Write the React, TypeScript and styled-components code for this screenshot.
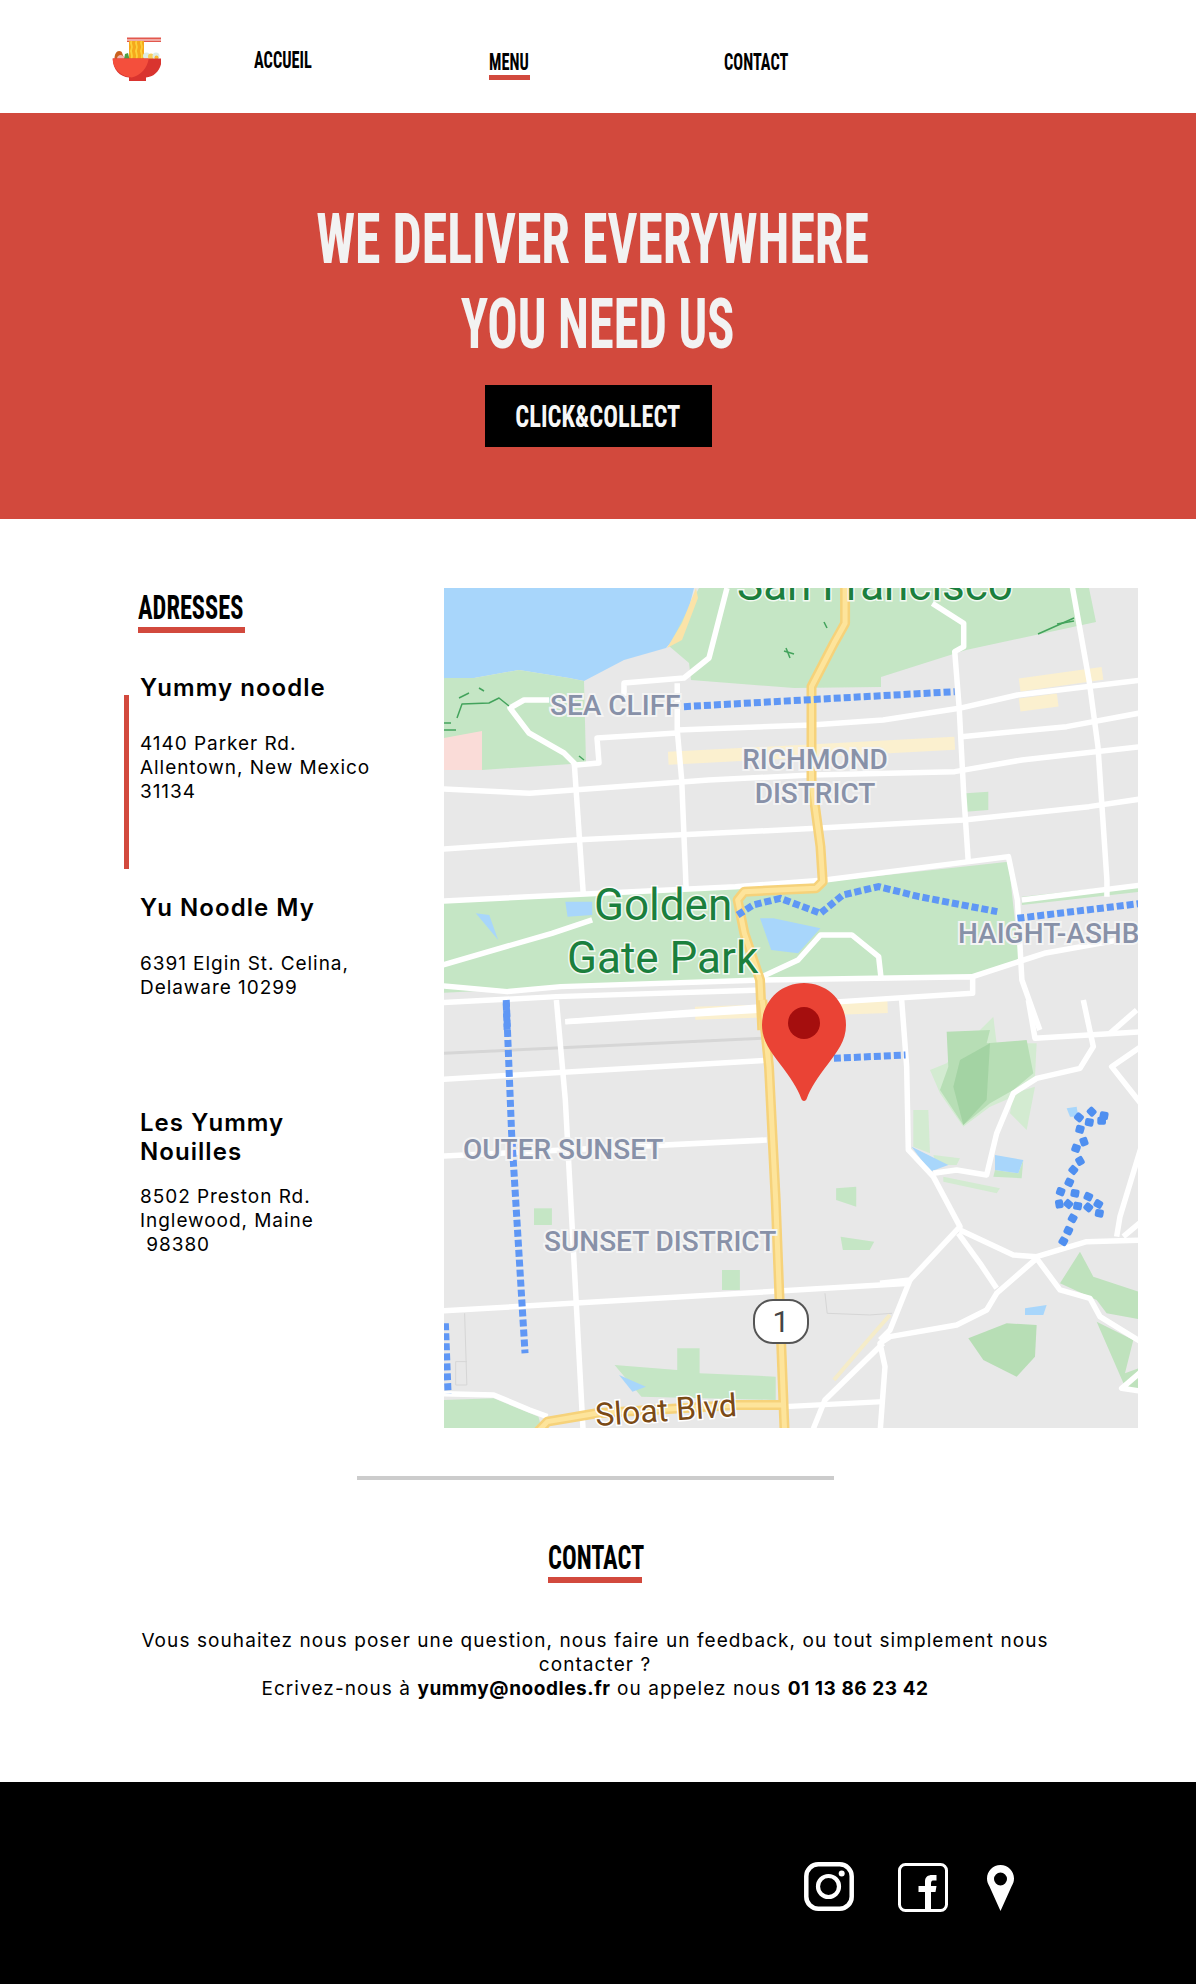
import React from 'react'
import styled, { createGlobalStyle } from 'styled-components'

const RED = '#d2493d'
const CONDENSED = `'Liberation Sans Narrow', 'Roboto Condensed', Roboto, sans-serif`
const BODY = `Inter, 'Open Sans', sans-serif`

const GlobalStyle = createGlobalStyle`
	html, body {
		margin: 0;
		padding: 0;
		background: #fff;
	}
	body {
		font-family: ${BODY};
		color: #000;
	}
	* {
		box-sizing: border-box;
	}
`

const addresses = [
	{ name: 'Yummy noodle', lines: ['4140 Parker Rd.', 'Allentown, New Mexico', '31134'], active: true, height: 220 },
	{ name: 'Yu Noodle My', lines: ['6391 Elgin St. Celina,', 'Delaware 10299'], active: false, height: 215 },
	{ name: ['Les Yummy', 'Nouilles'], lines: ['8502 Preston Rd.', 'Inglewood, Maine', '\u00a098380'], active: false, height: 160 },
]

const Logo = () => (
	<LogoSvg viewBox="12 17 49 44" aria-label="Yummy noodles">
		<path d="M27 17.500h34v2H27zM27 20.500h34v1.400H27z" fill="#e2574c" />
		<path d="M29 21v18h15V21z" fill="#f6a81c" />
		<path d="M31.500 21c-2 3 2 5 0 8s2 5 0 10M36.500 21c-2 3 2 5 0 8s2 5 0 10M41.500 21c-2 3 2 5 0 8s2 5 0 10" fill="none" stroke="#fbd13a" strokeWidth="1.800" />
		<path d="M14.500 39c0-5 2-8 4.500-8s3 1 3.500 3l2 5z" fill="#c9601e" />
		<path d="M17 39c0-3 2-4 3.500-4s4 1 4.500 4z" fill="#f3b4ae" />
		<path d="M24 39l1-5 3-1 1.500 6z" fill="#4f9e45" />
		<circle cx="46.500" cy="36" r="3.500" fill="#dcebe6" />
		<circle cx="51" cy="36.500" r="3" fill="#f7ce5c" />
		<circle cx="56" cy="36" r="3.500" fill="#dcebe6" />
		<circle cx="56.500" cy="37.500" r="2" fill="#f7b733" />
		<path d="M12.700 38.500h49c0 11-7 18.500-15.700 19v3.500H29v-3.500c-9-.5-16.300-8-16.300-19z" fill="#d9342f" />
		<path d="M12.700 38.500h36c-1 9-8 17-17 19-10-1-19-8-19-19z" fill="#f44f3c" />
	</LogoSvg>
)

// the map is traced from crops of the picture, each group keeps the scale of its crop
const Z3 = 'translate(-4 -8) scale(.4476 .3333)'
const Z4 = 'translate(-4 412) scale(.4476 .3333)'
const Z5 = 'translate(436 412) scale(.3333)'

const GREEN = '#c5e6c5'
const WATER = '#a8d6fb'

const shore = {
	water: '0,0 250,0 240,40 222,60 180,72 140,93 125,90 75,82 30,90 0,90',
	sand: '252,0 238,35 223,60 238,52 254,10',
	west: '0,90 30,90 75,82 125,90 140,93 142,175 38,182 0,182',
	pink: '0,150 38,143 38,182 0,182',
	north: '255,0 225,58 245,75 247,92 350,100 437,99 437,89 522,62 652,34 645,0',
	roads: [
		'233,145 153,150 155,175 132,177 120,165 85,145 66,120 80,112 105,112',
		'283,0 265,70 240,90 180,95 180,108',
	],
	paths: [
		'15,110 25,105',
		'35,100 40,103',
		'13,130 18,116 45,115 55,110 65,118',
		'0,135 7,135',
		'0,142 12,142',
		'135,168 140,172',
		'340,63 350,66',
		'342,60 346,70',
		'594,46 630,30',
		'613,36 630,33',
		'380,34 383,40',
		'392,44 396,52',
	],
}

const top = {
	parkGolden: '-20,965 660,925 860,905 1270,845 1295,1150 1200,1190 1000,1190 720,1205 300,1220 -20,1240',
	parkEdge: '1300,950 1600,905 1600,930 1300,975',
	roads: [
		'1600,295 1290,345 1160,385 990,420 830,435 530,450',
		'530,310 530,450 540,600 550,930',
		'300,550 320,940',
		'-20,625 200,640 600,600 830,585 1150,575 1300,540 1600,495',
		'-20,810 300,780 840,745 1170,720 1450,680 1600,650',
		'-20,965 660,920 860,900 1270,830 1290,960 1300,1200 1340,1350',
		'1100,70 1170,130 1170,200 1150,215 1160,385 1170,640 1180,840',
		'1410,0 1450,300 1470,500 1490,900 1490,950',
		'1165,470 1400,440 1600,390',
		'1300,960 1600,910',
		'-20,1165 250,1060 340,1020',
		'720,1190 800,1140 850,1065 920,1065 980,1130 985,1190',
		'-20,1215 150,1235 270,1220 720,1200 1190,1190 1190,1240 720,1280 280,1325',
		'-20,1270 260,1250 720,1230',
		'1190,1190 1350,1120 1600,1060',
	],
	highway: '905,0 905,130 880,190 830,320 830,600 850,800 855,905 840,925 680,935 665,960 680,1060 715,1200 720,1350',
	beige: ['1295,315 1480,280', '1295,375 1380,360', '510,535 1150,490', '570,1300 1000,1280'],
	dots: [
		'545,380 1150,335',
		'665,1005 700,975 760,955 850,1000 900,945 980,920 1070,950 1245,995',
		'1290,1015 1600,965',
		'148,1270 150,1350',
	],
}

const bottom = {
	blvdPark: '390,1095 530,1110 530,1045 580,1045 580,1120 750,1130 750,1200 450,1190',
	sloatPark: '9,1200 120,1195 220,1250 230,1300 9,1300',
	patches: ['885,565 930,560 930,620 885,600', '210,625 250,625 250,675 210,675', '630,810 670,810 670,870 630,870', '895,710 970,725 960,750 900,750'],
	roads: [
		'-20,240 740,180',
		'-20,470 730,420',
		'-20,935 1050,850',
		'260,0 280,300 320,1300',
		'280,65 720,30',
		'990,1030 860,1200 830,1300',
		'770,1220 990,1205',
		'-20,1180 120,1185 200,1230 240,1250',
	],
	thin: ['860,880 865,940 960,945 1010,940', '55,940 60,1155 35,1155 35,1085 60,1085'],
	highway: ['720,0 735,200 750,600 770,1300', '770,1215 660,1215 350,1240 240,1265 215,1300'],
	dots: ['148,0 160,400 190,1060', '880,175 1040,165', '12,970 18,1180'],
}

const east = {
	roads: [
		'65,0 80,200 85,450 160,530 240,680 90,840 0,850',
		'90,840 30,990 0,1020',
		'160,520 230,510 320,525 350,400 400,280 470,235 600,205 640,140 610,0',
		'445,0 465,115 790,95',
		'690,100 770,30',
		'790,135 695,200 790,320',
		'240,690 400,765 470,770 620,725 790,720',
		'235,700 300,790 350,865',
		'470,775 350,880 320,930 230,975 30,1010 0,1030 15,1100 0,1300',
		'470,775 540,870 630,895 660,950 790,1030',
		'790,420 720,650 710,710',
		'790,660 730,710',
		'790,1110 725,1165 790,1175',
	],
	pale: [
		'100,330 145,330 150,460 100,440',
		'160,465 240,475 230,495 170,495',
		'190,530 360,565 350,580 190,545',
		'400,280 465,260 440,390 390,340',
		'150,210 200,190 340,50 350,130 470,130 465,230 400,290 330,320 250,380 180,280',
	],
	mid: ['200,95 330,90 320,130 440,120 460,220 400,270 330,310 250,375 180,270 205,200', '265,1015 380,970 470,975 465,1070 410,1130 310,1080'],
	deep: ['240,180 330,130 320,300 250,375 220,260'],
	south: ['600,755 640,830 790,880 790,960 680,940 650,900 540,850', '650,965 760,1020 735,1120 790,1100 790,1180 735,1160'],
	lakes: ['95,440 205,495 150,515', '345,465 430,480 415,520 345,510', '435,925 500,915 490,945 435,945', '560,325 590,320 595,350 570,350'],
	lawn: '430,480 425,535 340,530 345,510 415,520',
	// dashes of the trail on the hill: x, y, rotation
	trail: [
		[550, 724, 30], [565, 692, 25], [578, 655, 30], [593, 618, 10], [565, 612, 40], [538, 612, 80],
		[542, 575, 20], [568, 547, 25], [580, 510, 40], [600, 483, 60], [588, 445, 20], [612, 425, 70],
		[600, 388, 15], [597, 352, 40], [628, 367, 10], [665, 362, 0], [672, 347, 10], [635, 335, 45],
		[585, 580, 10], [625, 590, 25], [655, 612, 30], [658, 640, 10], [625, 622, 40],
	],
}

const MapView = () => (
	<MapSvg viewBox="0 0 694 840" aria-label="Carte">
		<rect width="694" height="840" fill="#e8e8e8" />
		<polygon points={shore.water} fill={WATER} />
		<polygon points={shore.north} fill={GREEN} />
		<polygon points={shore.sand} fill="#fbe3a8" />
		<polygon points={shore.west} fill={GREEN} />
		<polygon points={shore.pink} fill="#fadcd8" />
		<g transform={Z3}>
			<polygon points={top.parkGolden} fill={GREEN} />
			<polygon points={top.parkEdge} fill={GREEN} />
			<polygon points="1175,640 1225,635 1225,690 1175,695" fill={GREEN} />
			<polygon points="280,965 340,965 340,1005 285,1010" fill={WATER} />
			<polygon points="80,1000 110,1005 130,1080" fill={WATER} />
			<polygon points="715,1015 745,1015 850,1045 800,1120 740,1110" fill={WATER} />
			{top.beige.map(p => (
				<Road key={p} points={p} stroke="#fbf0cf" strokeWidth="13" />
			))}
			{top.roads.map(p => (
				<Road key={p} points={p} stroke="#fff" strokeWidth="5.500" />
			))}
		</g>
		{shore.roads.map(p => (
			<Road key={p} points={p} stroke="#fff" strokeWidth="5.500" />
		))}
		{shore.paths.map(p => (
			<Road key={p} points={p} stroke="#43a35c" strokeWidth="1.500" />
		))}
		<g transform={Z4}>
			<polygon points={bottom.blvdPark} fill={GREEN} />
			<polygon points={bottom.sloatPark} fill={GREEN} />
			{bottom.patches.map(p => (
				<polygon key={p} points={p} fill={GREEN} />
			))}
			<polygon points="400,1125 460,1160 430,1175" fill={WATER} />
			<Road points="9,160 720,115" stroke="#d6d6d6" strokeWidth="3" />
			{bottom.thin.map(p => (
				<Road key={p} points={p} stroke="#d6d6d6" strokeWidth="1" />
			))}
			<Road points="1005,945 950,1030 880,1140" stroke="#f5ecc9" strokeWidth="4" />
			{bottom.roads.map(p => (
				<Road key={p} points={p} stroke="#fff" strokeWidth="5.500" />
			))}
		</g>
		<g transform={Z5}>
			{east.pale.map(p => (
				<polygon key={p} points={p} fill="#d3ebd1" />
			))}
			{east.mid.map(p => (
				<polygon key={p} points={p} fill="#b7deb5" />
			))}
			{east.deep.map(p => (
				<polygon key={p} points={p} fill="#a3d3a3" />
			))}
			{east.south.map(p => (
				<polygon key={p} points={p} fill="#bfe2bd" />
			))}
			<polygon points={east.lawn} fill={GREEN} />
			{east.lakes.map(p => (
				<polygon key={p} points={p} fill={WATER} />
			))}
			{east.roads.map(p => (
				<Road key={p} points={p} stroke="#fff" strokeWidth="5.500" />
			))}
			{east.trail.map(([x, y, r]) => (
				<rect key={`${x}-${y}`} x={x - 13} y={y - 12} width="26" height="24" rx="6" fill="#4f8ff0" transform={`rotate(${r} ${x} ${y})`} />
			))}
		</g>
		<g transform={Z3}>
			<Road points={top.highway} stroke="#f6d27a" strokeWidth="10" />
			<Road points={top.highway} stroke="#fde49b" strokeWidth="5" />
			{top.dots.map(p => (
				<Dots key={p} points={p} />
			))}
		</g>
		<g transform={Z4}>
			{bottom.highway.map(p => (
				<Road key={p} points={p} stroke="#f6d27a" strokeWidth="10" />
			))}
			{bottom.highway.map(p => (
				<Road key={p + 'c'} points={p} stroke="#fde49b" strokeWidth="5" />
			))}
			{bottom.dots.map(p => (
				<Dots key={p} points={p} />
			))}
		</g>
		<DistrictLabel x="106" y="127">SEA CLIFF</DistrictLabel>
		<DistrictLabel x="371" y="181" textAnchor="middle">RICHMOND</DistrictLabel>
		<DistrictLabel x="371" y="215" textAnchor="middle">DISTRICT</DistrictLabel>
		<DistrictLabel x="514" y="355">HAIGHT-ASHB</DistrictLabel>
		<DistrictLabel x="19" y="571">OUTER SUNSET</DistrictLabel>
		<DistrictLabel x="100" y="663">SUNSET DISTRICT</DistrictLabel>
		<ParkLabel x="431" y="12" textAnchor="middle">San Francisco</ParkLabel>
		<ParkLabel x="150" y="332">Golden</ParkLabel>
		<ParkLabel x="123" y="385">Gate Park</ParkLabel>
		<StreetLabel x="152" y="838" transform="rotate(-4 152 838)">Sloat Blvd</StreetLabel>
		<rect x="310" y="712" width="54" height="43" rx="19" fill="#fff" stroke="#555" strokeWidth="2" />
		<ShieldLabel x="337" y="744" textAnchor="middle">1</ShieldLabel>
		<path d="M360 395c24 0 42 19 42 42 0 16-9 27-18 39-10 13-18 25-21 34-1 4-5 4-6 0-3-9-11-21-21-34-9-12-18-23-18-39 0-23 18-42 42-42z" fill="#ea4335" />
		<circle cx="360" cy="435" r="16" fill="#a50e0e" />
	</MapSvg>
)

const Instagram = () => (
	<SocialSvg $w={50} $h={50} $top={0} viewBox="0 0 50 50" fill="none" stroke="#fff">
		<rect x="2.300" y="2.300" width="45.400" height="44.400" rx="12" strokeWidth="4.500" />
		<circle cx="24.500" cy="24.500" r="10.500" strokeWidth="4.200" />
		<circle cx="37.700" cy="11.500" r="3" fill="#fff" stroke="none" />
	</SocialSvg>
)

const Facebook = () => (
	<SocialSvg $w={50} $h={50} $top={1} viewBox="0 0 50 50" fill="none">
		<rect x="1.500" y="1.500" width="47" height="46" rx="6" stroke="#fff" strokeWidth="3" />
		<path d="M27 48V29h-6.500v-6H27v-4.500C27 14 30 12 34 12h4.500v5.500H36c-2 0-3 .5-3 3V23h5.500l-1 6H33v19z" fill="#fff" />
	</SocialSvg>
)

const Pin = () => (
	<SocialSvg $w={27} $h={46} $top={3} $pull={5} viewBox="0 0 27 46">
		<path fillRule="evenodd" d="M13.500 0C6 0 0 6 0 13.500c0 3 1 5.500 2.500 8L13.500 46l11-24.500c1.500-2.500 2.500-5 2.500-8C27 6 21 0 13.500 0zm0 7.500a6.500 6.500 0 1 1 0 13 6.500 6.500 0 0 1 0-13z" fill="#fff" />
	</SocialSvg>
)

const App: React.FC = () => {
	return (
		<>
			<GlobalStyle />
			<Header>
				<Logo />
				<Nav>
					<NavItem $raised $width={59}>
						<NavText>ACCUEIL</NavText>
					</NavItem>
					<NavItem $active $width={41}>
						<NavText>MENU</NavText>
					</NavItem>
					<NavItem $width={64}>
						<NavText>CONTACT</NavText>
					</NavItem>
				</Nav>
			</Header>
			<Hero>
				<HeroTitle>
					<HeroLine $shift={-5} $scale={0.73}>WE DELIVER EVERYWHERE</HeroLine>
					<HeroLine $shift={0} $scale={0.71}>YOU NEED US</HeroLine>
				</HeroTitle>
				<HeroButton>
					<ButtonText>CLICK&amp;COLLECT</ButtonText>
				</HeroButton>
			</Hero>
			<Locations>
				<Aside>
					<SectionTitle $width={107}>
						<SectionText>ADRESSES</SectionText>
					</SectionTitle>
					<Cards>
						{addresses.map(a => (
							<Card key={a.lines[0]} $active={a.active} $height={a.height}>
								<CardName>
									{Array.isArray(a.name)
										? a.name.map(n => <CardLine key={n}>{n}</CardLine>)
										: a.name}
								</CardName>
								<CardAddress>
									{a.lines.map(l => (
										<CardLine key={l}>{l}</CardLine>
									))}
								</CardAddress>
							</Card>
						))}
					</Cards>
				</Aside>
				<MapView />
			</Locations>
			<Divider />
			<Contact>
				<SectionTitle $width={94}>
					<SectionText>CONTACT</SectionText>
				</SectionTitle>
				<ContactText>
					Vous souhaitez nous poser une question, nous faire un feedback, ou tout simplement nous contacter ?
					<br />
					Ecrivez-nous à <Strong>yummy@noodles.fr</Strong> ou appelez nous <Strong>01 13 86 23 42</Strong>
				</ContactText>
			</Contact>
			<Footer>
				<Instagram />
				<Facebook />
				<Pin />
			</Footer>
		</>
	)
}

export default App

const Header = styled.header`
	height: 113px;
	padding: 37px 0 0 112px;
	display: flex;
	align-items: flex-start;
	background: #fff;
`
const LogoSvg = styled.svg`
	width: 49px;
	height: 44px;
	flex-shrink: 0;
`
const Nav = styled.nav`
	margin-left: 93px;
	display: grid;
	grid-template-columns: repeat(3, 235px);
`
const NavItem = styled.div<{ $raised?: boolean; $active?: boolean; $width: number }>`
	justify-self: start;
	width: ${({ $width }) => $width}px;
	margin-top: ${({ $raised }) => ($raised ? '11px' : '13px')};
	padding-bottom: 1px;
	font-family: ${CONDENSED};
	font-weight: 700;
	font-size: 24px;
	line-height: 24px;
	white-space: nowrap;
	border-bottom: 5px solid ${({ $active }) => ($active ? RED : 'transparent')};
`
const NavText = styled.span`
	display: inline-block;
	transform: scaleX(0.68);
	transform-origin: left;
`
const Hero = styled.section`
	height: 406px;
	background: ${RED};
	padding-top: 83px;
	display: flex;
	flex-direction: column;
	align-items: center;
`
const HeroTitle = styled.h1`
	margin: 0;
	font-family: ${CONDENSED};
	font-weight: 700;
	font-size: 71px;
	line-height: 85px;
	color: #f2f2f2;
	text-align: center;
`
const HeroLine = styled.span<{ $shift: number; $scale: number }>`
	display: block;
	white-space: nowrap;
	transform: translateX(${({ $shift }) => $shift}px) scaleX(${({ $scale }) => $scale});
`
const HeroButton = styled.button`
	margin-top: 19px;
	width: 227px;
	height: 62px;
	border: 0;
	padding: 0;
	background: #000;
	color: #f7f7f7;
	font-family: ${CONDENSED};
	font-weight: 700;
	font-size: 32px;
	line-height: 62px;
`
const ButtonText = styled.span`
	display: inline-block;
	transform: scaleX(0.765);
`
const Locations = styled.section`
	padding: 69px 58px 0 138px;
	display: flex;
	justify-content: space-between;
	align-items: flex-start;
`
const Aside = styled.aside`
	width: 260px;
	padding-top: 2px;
`
const SectionTitle = styled.h2<{ $width: number }>`
	margin: 0;
	width: ${({ $width }) => $width}px;
	height: 43px;
	font-family: ${CONDENSED};
	font-weight: 700;
	font-size: 33px;
	line-height: 36px;
	white-space: nowrap;
	border-bottom: 6px solid ${RED};
`
const SectionText = styled.span`
	display: inline-block;
	transform: scaleX(0.74);
	transform-origin: left;
`
const Cards = styled.div`
	margin-top: 40px;
	margin-left: 2px;
`
const Card = styled.article<{ $active: boolean; $height: number }>`
	position: relative;
	height: ${({ $height }) => $height}px;

	${({ $active }) =>
		$active &&
		`
		&::before {
			content: '';
			position: absolute;
			left: -16px;
			top: 22px;
			width: 5px;
			height: 174px;
			background: ${RED};
		}
	`}
`
const CardName = styled.h3`
	margin: 0 0 19px;
	min-height: 40px;
	font-size: 24px;
	line-height: 29px;
	font-weight: 600;
	letter-spacing: 1.05px;
`
const CardLine = styled.span`
	display: block;
	white-space: pre;
`
const CardAddress = styled.p`
	margin: 0;
	font-size: 19px;
	line-height: 24px;
	font-weight: 400;
	letter-spacing: 0.95px;
`
const MapSvg = styled.svg`
	display: block;
	width: 694px;
	height: 840px;
	flex-shrink: 0;
`
const Road = styled.polyline.attrs({ fill: 'none', vectorEffect: 'non-scaling-stroke', strokeLinejoin: 'round' })``
const Dots = styled.polyline.attrs({
	fill: 'none',
	stroke: '#5f97f5',
	strokeWidth: 7,
	strokeDasharray: '7 3',
	vectorEffect: 'non-scaling-stroke',
})``
const DistrictLabel = styled.text`
	font-family: Roboto, sans-serif;
	font-weight: 500;
	font-size: 28px;
	fill: #8891a8;
	stroke: #f4f4f4;
	stroke-width: 4px;
	paint-order: stroke;
`
const ParkLabel = styled.text`
	font-family: Roboto, sans-serif;
	font-size: 44px;
	fill: #1b7f3d;
	stroke: #ffffffcc;
	stroke-width: 3px;
	paint-order: stroke;
`
const StreetLabel = styled.text`
	font-family: Roboto, sans-serif;
	font-size: 32px;
	fill: #7a4a16;
	stroke: #fff;
	stroke-width: 3px;
	paint-order: stroke;
`
const ShieldLabel = styled.text`
	font-family: Roboto, sans-serif;
	font-size: 30px;
	fill: #444;
`
const Divider = styled.hr`
	margin: 48px 0 0 357px;
	width: 477px;
	height: 4px;
	border: 0;
	background: #ccc;
`
const Contact = styled.section`
	height: 302px;
	padding: 60px 6px 0 0;
	display: flex;
	flex-direction: column;
	align-items: center;
`
const ContactText = styled.p`
	margin: 46px 0 0;
	width: 930px;
	font-size: 19px;
	line-height: 24px;
	letter-spacing: 1.08px;
	text-align: center;
`
const Strong = styled.b`
	letter-spacing: 0.55px;
`
const Footer = styled.footer`
	height: 202px;
	background: #000;
	padding: 80px 0 0 804px;
	display: flex;
	align-items: flex-start;
	gap: 44px;
`
const SocialSvg = styled.svg<{ $w: number; $h: number; $top: number; $pull?: number }>`
	display: block;
	width: ${({ $w }) => $w}px;
	height: ${({ $h }) => $h}px;
	margin-top: ${({ $top }) => $top}px;
	margin-left: ${({ $pull = 0 }) => -$pull}px;
	flex-shrink: 0;
`
